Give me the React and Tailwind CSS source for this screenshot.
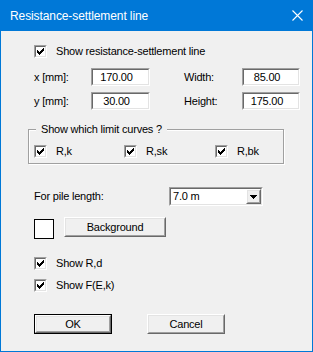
import React from "react";

const CHECK =
  "M6 0h1v1h-1z M5 1h2v1h-2z M0 2h1v1h-1z M4 2h3v1h-3z M0 3h2v1h-2z M3 3h3v1h-3z M0 4h5v1h-5z M1 5h3v1h-3z M2 6h1v1h-1z";

function Check() {
  return (
    <span className="block w-[13px] h-[13px] shrink-0 border border-t-[#a0a0a0] border-l-[#a0a0a0] border-b-white border-r-white">
      <span className="block w-full h-full border border-t-[#696969] border-l-[#696969] border-b-[#e3e3e3] border-r-[#e3e3e3] bg-white">
        <svg width="7" height="7" viewBox="0 0 7 7" shapeRendering="crispEdges" className="block ml-[1px] mt-[1px]">
          <path d={CHECK} fill="#000" />
        </svg>
      </span>
    </span>
  );
}

function CheckRow({ label, className = "" }) {
  return (
    <div className={`flex items-center h-[13px] ${className}`}>
      <Check />
      <span className="ml-[9px] leading-[13px] whitespace-nowrap">{label}</span>
    </div>
  );
}

function Sunken({ className = "", children, inner = "" }) {
  return (
    <div className={`border border-t-[#a0a0a0] border-l-[#a0a0a0] border-b-white border-r-white ${className}`}>
      <div className={`h-full border border-t-[#696969] border-l-[#696969] border-b-[#e3e3e3] border-r-[#e3e3e3] bg-white ${inner}`}>
        {children}
      </div>
    </div>
  );
}

function Edit({ value, className = "" }) {
  return (
    <Sunken className={`h-[18px] ${className}`} inner="flex items-center justify-center pr-[8px]">
      <span className="leading-[13px]">{value}</span>
    </Sunken>
  );
}

function Raised({ className = "", children }) {
  return (
    <div className={`border border-t-white border-l-white border-b-[#696969] border-r-[#696969] bg-[#f0f0f0] ${className}`}>
      <div className="h-full border border-t-[#e3e3e3] border-l-[#e3e3e3] border-b-[#a0a0a0] border-r-[#a0a0a0] flex items-center justify-center">
        {children}
      </div>
    </div>
  );
}

export default function App() {
  return (
    <div
      className="w-[313px] h-[352px] bg-[#0078d7] px-[1px] pb-[1px] flex flex-col text-black text-[11px] tracking-[-0.2px]"
      style={{ fontFamily: '"Liberation Sans", Arial, sans-serif' }}
    >
      <div className="h-[31px] flex items-center justify-between pl-[9px] pr-[9px] text-white text-[12px] tracking-[-0.1px]">
        <span>Resistance-settlement line</span>
        <svg width="11" height="11" viewBox="0 0 11 11" className="block">
          <path d="M0.5 0.5L10.5 10.5M10.5 0.5L0.5 10.5" stroke="#fff" strokeWidth="1.1" />
        </svg>
      </div>

      <div className="flex-1 bg-[#f0f0f0] pl-[33px] flex flex-col items-start">
        <CheckRow label="Show resistance-settlement line" className="mt-[14px]" />

        <div className="flex items-center h-[18px] mt-[10px]">
          <span className="w-[57px]">x [mm]:</span>
          <Edit value="170.00" className="w-[59px]" />
          <span className="ml-[34px] w-[58px]">Width:</span>
          <Edit value="85.00" className="w-[58px]" />
        </div>
        <div className="flex items-center h-[18px] mt-[6px]">
          <span className="w-[57px]">y [mm]:</span>
          <Edit value="30.00" className="w-[59px]" />
          <span className="ml-[34px] w-[58px]">Height:</span>
          <Edit value="175.00" className="w-[58px]" />
        </div>

        <div className="relative mt-[19px] ml-[-6px] w-[256px] h-[35px] border border-[#a0a0a0] shadow-[inset_1px_1px_0_#fff,1px_1px_0_#fff] pt-[15px] pl-[5px] flex items-start">
          <span className="absolute top-[-7px] left-[7px] px-[5px] bg-[#f0f0f0] leading-[13px] whitespace-nowrap">
            Show which limit curves ?
          </span>
          <CheckRow label="R,k" className="w-[90px]" />
          <CheckRow label="R,sk" className="w-[91px]" />
          <CheckRow label="R,bk" />
        </div>

        <div className="flex items-center h-[19px] mt-[23px]">
          <span className="w-[135px]">For pile length:</span>
          <Sunken className="w-[94px] h-[19px]" inner="flex items-center justify-between">
            <span className="pl-[2px] leading-[13px]">7.0 m</span>
            <Raised className="w-[15px] h-full">
              <svg width="7" height="4" viewBox="0 0 7 4" shapeRendering="crispEdges" className="block">
                <path d="M0 0h7v1h-7z M1 1h5v1h-5z M2 2h3v1h-3z M3 3h1v1h-1z" fill="#000" />
              </svg>
            </Raised>
          </Sunken>
        </div>

        <div className="flex items-start mt-[11px]">
          <div className="w-[20px] h-[20px] mt-[2px] border border-black bg-white" />
          <Raised className="ml-[10px] w-[102px] h-[20px]">
            <span className="leading-[13px]">Background</span>
          </Raised>
        </div>

        <CheckRow label="Show R,d" className="mt-[18px]" />
        <CheckRow label="Show F(E,k)" className="mt-[9px]" />

        <div className="flex items-start mt-[22px]">
          <div className="w-[78px] h-[20px] border border-black">
            <Raised className="w-full h-full">
              <span className="leading-[13px]">OK</span>
            </Raised>
          </div>
          <Raised className="ml-[35px] w-[78px] h-[20px]">
            <span className="leading-[13px]">Cancel</span>
          </Raised>
        </div>
      </div>
    </div>
  );
}
